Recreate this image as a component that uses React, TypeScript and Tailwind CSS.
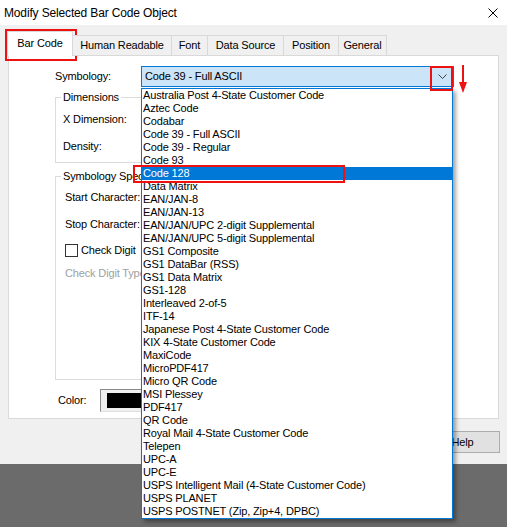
import React from "react";

const items = [
  "Australia Post 4-State Customer Code",
  "Aztec Code",
  "Codabar",
  "Code 39 - Full ASCII",
  "Code 39 - Regular",
  "Code 93",
  "Code 128",
  "Data Matrix",
  "EAN/JAN-8",
  "EAN/JAN-13",
  "EAN/JAN/UPC 2-digit Supplemental",
  "EAN/JAN/UPC 5-digit Supplemental",
  "GS1 Composite",
  "GS1 DataBar (RSS)",
  "GS1 Data Matrix",
  "GS1-128",
  "Interleaved 2-of-5",
  "ITF-14",
  "Japanese Post 4-State Customer Code",
  "KIX 4-State Customer Code",
  "MaxiCode",
  "MicroPDF417",
  "Micro QR Code",
  "MSI Plessey",
  "PDF417",
  "QR Code",
  "Royal Mail 4-State Customer Code",
  "Telepen",
  "UPC-A",
  "UPC-E",
  "USPS Intelligent Mail (4-State Customer Code)",
  "USPS PLANET",
  "USPS POSTNET (Zip, Zip+4, DPBC)",
];

const tabs = [
  { label: "Human Readable", w: "w-[99px]" },
  { label: "Font", w: "w-[36px]" },
  { label: "Data Source", w: "w-[76px]" },
  { label: "Position", w: "w-[55px]" },
  { label: "General", w: "w-[48px]" },
];

export default function App() {
  return (
    <div
      className="relative w-[507px] h-[527px] bg-[#6b6b6b] text-[11px] tracking-[-0.15px] text-black overflow-hidden"
      style={{ fontFamily: '"Liberation Sans", Arial, sans-serif' }}
    >
      <div className="h-[464px] bg-[#f0f0f0] flex flex-col">
        {/* Title bar */}
        <div className="h-[25px] bg-white flex items-center justify-between pl-[4px] pr-[9px]">
          <span className="text-[12px] leading-none">Modify Selected Bar Code Object</span>
          <svg width="10" height="10" viewBox="0 0 10 10">
            <path d="M0.5 0.5 L9.5 9.5 M9.5 0.5 L0.5 9.5" stroke="#000" strokeWidth="1" />
          </svg>
        </div>

        {/* Tabs */}
        <div className="flex items-end ml-[7px] mt-[6px] h-[25px] relative z-10 -mb-px">
          <div className="w-[66px] h-[25px] bg-white border border-b-0 border-[#d9d9d9] flex items-center justify-center pb-[1px]">
            Bar Code
          </div>
          {tabs.map((t) => (
            <div
              key={t.label}
              className={`${t.w} h-[21px] border border-l-0 border-[#d9d9d9] bg-[#f0f0f0] flex items-center justify-center`}
            >
              {t.label}
            </div>
          ))}
        </div>

        {/* Panel */}
        <div className="ml-[8px] w-[491px] h-[364px] border border-[#d9d9d9] bg-white flex flex-col">
          <div className="mt-[10px] flex items-center h-[21px]">
            <span className="pl-[46px] w-[132px]">Symbology:</span>
            <div className="w-[313px] h-[21px] border border-[#0078d7] bg-[#cce4f7] flex items-center justify-between pl-[3px] pr-[6px]">
              <span>Code 39 - Full ASCII</span>
              <svg width="9" height="6" viewBox="0 0 9 6">
                <path d="M0.5 0.5 L4.5 4.5 L8.5 0.5" stroke="#404040" strokeWidth="1" fill="none" />
              </svg>
            </div>
          </div>

          {/* Dimensions */}
          <div className="ml-[46px] mt-[10px] w-[390px] h-[66px] border border-[#dcdcdc] flex flex-col">
            <span className="block w-fit bg-white -mt-[7px] ml-[5px] px-[2px] leading-[13px]">Dimensions</span>
            <span className="ml-[7px] mt-[9px] leading-[13px]">X Dimension:</span>
            <span className="ml-[7px] mt-[14px] leading-[13px]">Density:</span>
          </div>

          {/* Symbology Specific */}
          <div className="ml-[46px] mt-[13px] w-[390px] h-[204px] border border-[#dcdcdc] flex flex-col">
            <span className="block w-fit bg-white -mt-[7px] ml-[5px] px-[2px] leading-[13px]">Symbology Specific</span>
            <span className="ml-[9px] mt-[8px] leading-[13px]">Start Character:</span>
            <span className="ml-[9px] mt-[14px] leading-[13px]">Stop Character:</span>
            <div className="ml-[9px] mt-[13px] flex items-center h-[13px]">
              <div className="w-[13px] h-[13px] border border-[#333] bg-white" />
              <span className="ml-[3px]">Check Digit</span>
            </div>
            <span className="ml-[9px] mt-[10px] leading-[13px] text-[#a0a0a0]">Check Digit Type:</span>
          </div>

          {/* Color */}
          <div className="mt-[9px] flex items-center h-[23px]">
            <span className="pl-[49px] w-[91px]">Color:</span>
            <div className="w-[60px] h-[23px] border border-[#8a8a8a] border-r-[#e0e0e0] border-b-[#e0e0e0] bg-[#f0f0f0] px-[6px] py-[3px]">
              <div className="w-full h-full bg-black" />
            </div>
          </div>
        </div>

        {/* Buttons */}
        <div className="flex justify-end pr-[7px] mt-[12px]">
          <div className="w-[75px] h-[22px] bg-[#e1e1e1] border border-[#adadad] flex items-center justify-center">
            Help
          </div>
        </div>
      </div>

      {/* Dropdown list overlay */}
      <div className="absolute left-[141px] top-[88px] w-[312px] h-[431px] border border-[#0078d7] bg-white shadow-[3px_3px_4px_rgba(0,0,0,0.35)] flex flex-col">
        {items.map((it) => (
          <div
            key={it}
            className={`h-[13px] leading-[13px] pl-[1px] whitespace-nowrap ${
              it === "Code 128" ? "bg-[#0078d7] text-white" : ""
            }`}
          >
            {it}
          </div>
        ))}
      </div>

      {/* Red annotations */}
      <div className="absolute left-[5px] top-[29px] w-[72px] h-[32px] border-2 border-[#ee1111]" />
      <div className="absolute left-[430px] top-[66px] w-[23px] h-[25px] border-2 border-[#ee1111]" />
      <div className="absolute left-[133px] top-[165px] w-[212px] h-[18px] border-2 border-[#ee1111]" />
      <svg className="absolute left-[458px] top-[64px]" width="10" height="30" viewBox="0 0 10 30">
        <path d="M5 1 L5 20" stroke="#ee1111" strokeWidth="2" />
        <path d="M1 18 L9 18 L5 29 Z" fill="#ee1111" />
      </svg>
    </div>
  );
}
